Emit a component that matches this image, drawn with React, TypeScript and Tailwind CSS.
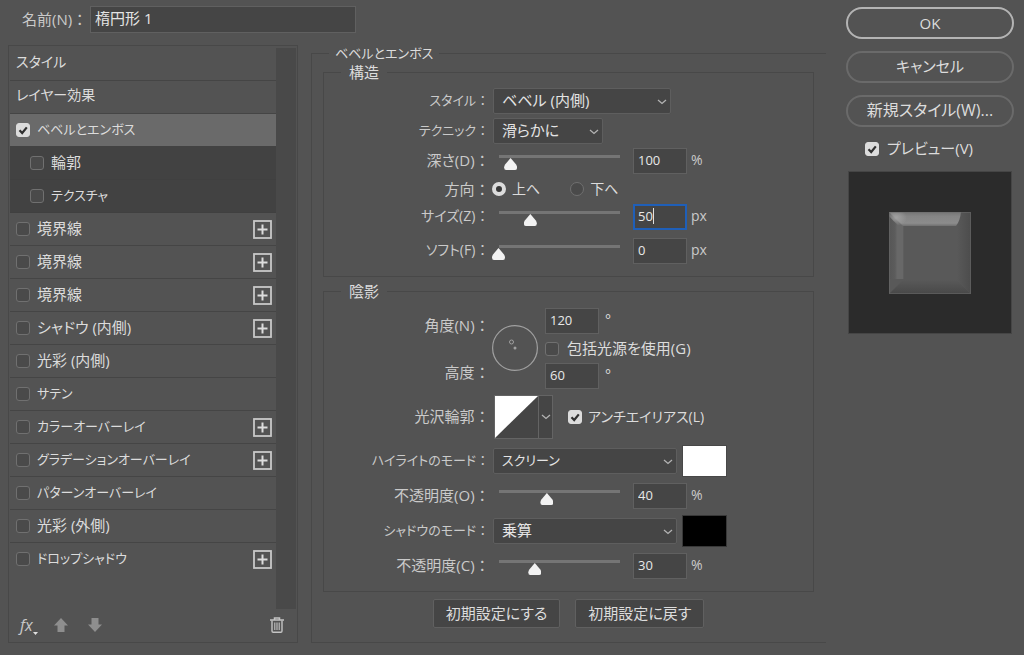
import React, { useEffect, useRef } from "react";
import clsx from "clsx";

interface Effect {
  id: string;
  label: string;
  checked?: boolean;
  selected?: boolean;
  sub?: boolean;
  addable?: boolean;
}

const EFFECTS: Effect[] = [
  { id: "bevel", label: "ベベルとエンボス", checked: true, selected: true },
  { id: "contour", label: "輪郭", sub: true },
  { id: "texture", label: "テクスチャ", sub: true },
  { id: "stroke-1", label: "境界線", addable: true },
  { id: "stroke-2", label: "境界線", addable: true },
  { id: "stroke-3", label: "境界線", addable: true },
  { id: "inner-shadow", label: "シャドウ (内側)", addable: true },
  { id: "inner-glow", label: "光彩 (内側)" },
  { id: "satin", label: "サテン" },
  { id: "color", label: "カラーオーバーレイ", addable: true },
  { id: "gradient", label: "グラデーションオーバーレイ", addable: true },
  { id: "pattern", label: "パターンオーバーレイ" },
  { id: "outer-glow", label: "光彩 (外側)" },
  { id: "drop-shadow", label: "ドロップシャドウ", addable: true },
];

const textSize = (text: string) => {
  if (/[一-龠]/.test(text)) return "text-[15px]";
  return /[A-Z]/.test(text) ? "text-[14px]" : "text-[13px]";
};

const Check: React.FC<{ id: string; checked?: boolean }> = ({ id, checked }) => (
  <span className="relative flex shrink-0">
    <input
      id={id}
      type="checkbox"
      defaultChecked={checked}
      className="peer size-3.5 appearance-none rounded-[3px] border border-[#707070] bg-[#4a4a4a] checked:border-[#dcdcdc] checked:bg-[#dcdcdc]"
    />
    <svg viewBox="0 0 14 14" className="pointer-events-none absolute inset-0 hidden size-3.5 peer-checked:block">
      <path d="M3.5 7.2 6.2 10 10.8 4.4" fill="none" stroke="#303030" strokeWidth="2.2" />
    </svg>
  </span>
);

const Chevron: React.FC<{ className?: string }> = ({ className }) => (
  <svg viewBox="0 0 10 6" className={clsx("h-1.5 w-2.5", className)}>
    <path d="M1 1 5 4.4 9 1" fill="none" stroke="#b4b4b4" strokeWidth="1.3" />
  </svg>
);

const Select: React.FC<{ id: string; value: string; className: string }> = ({ id, value, className }) => (
  <span className={clsx("relative flex", className)}>
    <select
      id={id}
      defaultValue={value}
      className={clsx(
        "h-[26px] w-full appearance-none rounded-[2px] border border-[#5e5e5e] bg-[#454545] pr-6 pb-0.5 pl-2 text-[#e4e4e4]",
        textSize(value)
      )}
    >
      <option>{value}</option>
    </select>
    <Chevron className="pointer-events-none absolute top-[11px] right-1" />
  </span>
);

const NumberField: React.FC<{ id: string; value: string; focused?: boolean }> = ({ id, value, focused }) => {
  const ref = useRef<HTMLInputElement>(null);

  useEffect(() => {
    if (!focused || !ref.current) return;
    ref.current.focus();
    ref.current.setSelectionRange(value.length, value.length);
  }, [focused, value]);

  return (
    <span className="relative flex">
      <input
        id={id}
        ref={ref}
        type="text"
        defaultValue={value}
        className="peer h-[26px] w-[54px] border border-[#606060] bg-[#454545] px-1 pb-0.5 text-[13px] text-[#e8e8e8] caret-transparent outline-none focus:border-[#1f5fb8] focus:ring-1 focus:ring-[#1f5fb8] focus:ring-inset"
      />
      <span className="pointer-events-none absolute top-1 left-5 hidden h-4 w-px bg-[#e0e0e0] peer-focus:block" />
    </span>
  );
};

const Label: React.FC<{ htmlFor: string; text: string }> = ({ htmlFor, text }) => (
  <label
    htmlFor={htmlFor}
    className={clsx("w-[162px] shrink-0 pb-0.5 text-right whitespace-pre text-[#cacaca]", textSize(text))}
  >
    {text} ：
  </label>
);

interface SliderProps {
  id: string;
  label: string;
  value: number;
  max: number;
  unit: string;
  focused?: boolean;
}

const SliderRow: React.FC<SliderProps> = ({ id, label, value, max, unit, focused }) => (
  <div className="flex h-[26px] items-center">
    <Label htmlFor={id} text={label} />
    <input
      type="range"
      aria-label={label}
      min={0}
      max={max}
      defaultValue={value}
      className="ml-1.5 h-5 w-[134px] appearance-none bg-[linear-gradient(#757575,#757575)] bg-[length:121px_3px] bg-[position:7px_4px] bg-no-repeat [&::-webkit-slider-runnable-track]:h-5 [&::-webkit-slider-thumb]:mt-[7px] [&::-webkit-slider-thumb]:h-3 [&::-webkit-slider-thumb]:w-[13px] [&::-webkit-slider-thumb]:appearance-none [&::-webkit-slider-thumb]:bg-[#f2f2f2] [&::-webkit-slider-thumb]:[clip-path:path('M6.5_0L12_6.5Q13_8_13_9.5Q13_12_11_12H2Q0_12_0_9.5Q0_8_1_6.5Z')]"
    />
    <span className="ml-[7px] flex items-center gap-1">
      <NumberField id={id} value={String(value)} focused={focused} />
      <span className="pb-0.5 text-[#cacaca]">{unit}</span>
    </span>
  </div>
);

const Radio: React.FC<{ label: string; checked?: boolean }> = ({ label, checked }) => (
  <label className="flex items-center gap-1.5 text-[#dcdcdc]">
    <input
      type="radio"
      name="direction"
      defaultChecked={checked}
      className="size-3.5 appearance-none rounded-full border border-[#707070] bg-[#4a4a4a] checked:border-4 checked:border-[#dcdcdc] checked:bg-[#383838]"
    />
    {label}
  </label>
);

const EffectRow: React.FC<{ effect: Effect }> = ({ effect }) => (
  <li
    className={clsx(
      "flex h-[33px] items-center gap-[7px] border-b pr-1",
      effect.sub ? "border-[#404040] bg-[#424242] pl-5" : "pl-1.5",
      effect.selected ? "border-[#424242] bg-[#6a6a6a]" : !effect.sub && "border-[#454545]",
      effect.id === "drop-shadow" && "border-transparent"
    )}
  >
    <Check id={effect.id} checked={effect.checked} />
    <label htmlFor={effect.id} className={clsx("flex-1 pb-0.5", textSize(effect.label))}>
      {effect.label}
    </label>
    {effect.addable && (
      <button type="button" aria-label="追加">
        <svg viewBox="0 0 19 19" className="size-[19px]" fill="none" stroke="#c8c8c8">
          <rect x="1" y="1" width="17" height="17" strokeWidth="1.8" />
          <path d="M9.5 4.5v10M4.5 9.5h10" stroke="#dcdcdc" strokeWidth="2" />
        </svg>
      </button>
    )}
  </li>
);

const EffectList: React.FC = () => (
  <aside className="mt-px flex w-[290px] shrink-0 flex-col border border-[#484848] p-px">
    <div className="flex flex-1 pt-px">
      <ul className="flex-1">
        <li className="flex h-[33px] items-center border-b border-[#454545] pb-1 pl-1.5">スタイル</li>
        <li className="flex h-[33px] items-center border-b border-[#454545] pb-1 pl-1.5">レイヤー効果</li>
        {EFFECTS.map((effect) => (
          <EffectRow key={effect.id} effect={effect} />
        ))}
      </ul>
      <div className="w-5 bg-[#494949]" />
    </div>
    <div className="flex h-8 items-center pl-2.5">
      <button type="button" className="flex items-end text-base text-[#c8c8c8] italic">
        <span className="leading-5">fx</span>
        <svg viewBox="0 0 5 3" className="h-[3px] w-[5px]">
          <path d="M0 0h5L2.5 3z" fill="#e0e0e0" />
        </svg>
      </button>
      <button type="button" aria-label="上へ移動" className="ml-4">
        <svg viewBox="0 0 14 14" className="size-3.5" fill="#8e8e8e">
          <path d="M7 0 14 7.5H10.500V14H3.500V7.5H0z" />
        </svg>
      </button>
      <button type="button" aria-label="下へ移動" className="ml-5">
        <svg viewBox="0 0 14 14" className="size-3.5" fill="#8e8e8e">
          <path d="M7 14 14 6.500H10.500V0H3.500V6.500H0z" />
        </svg>
      </button>
      <button type="button" aria-label="削除" className="mr-3 ml-auto">
        <svg viewBox="0 0 14 16" className="h-4 w-3.5" fill="none" stroke="#c4c4c4">
          <path d="M0 3h14M4.500 2.500V1h5v1.500" strokeWidth="1.5" />
          <path d="M2 3.500V14q0 1.200 1.200 1.200h7.600Q12 15.200 12 14V3.500" strokeWidth="1.400" />
          <path d="M4.800 5.500v7.500M7 5.500v7.500M9.200 5.500v7.500" strokeWidth="1.100" />
        </svg>
      </button>
    </div>
  </aside>
);

const Structure: React.FC = () => (
  <fieldset className="mt-px border border-[#484848] pb-3">
    <legend className="ml-[17px] px-2 text-[15px] leading-[18px]">構造</legend>
    <div className="flex flex-col gap-1 pt-[7px]">
      <div className="flex items-center gap-[7px]">
        <Label htmlFor="style" text="スタイル" />
        <Select id="style" value="ベベル (内側)" className="w-[178px]" />
      </div>
      <div className="flex items-center gap-[7px]">
        <Label htmlFor="technique" text="テクニック" />
        <Select id="technique" value="滑らかに" className="w-[110px]" />
      </div>
      <SliderRow id="depth" label="深さ(D)" value={100} max={1000} unit="%" />
      <div className="flex h-[22px] items-center gap-1.5">
        <span className="w-[162px] shrink-0 text-right text-[15px] text-[#cacaca]">方向 ：</span>
        <div className="flex gap-[30px]">
          <Radio label="上へ" checked />
          <Radio label="下へ" />
        </div>
      </div>
      <SliderRow id="size" label="サイズ(Z)" value={50} max={190} unit="px" focused />
      <div className="pt-1">
        <SliderRow id="soften" label="ソフト(F)" value={0} max={16} unit="px" />
      </div>
    </div>
  </fieldset>
);

const Shading: React.FC = () => (
  <fieldset className="mt-[5px] border border-[#484848] pb-3">
    <legend className="ml-[17px] px-2 text-[15px] leading-[18px]">陰影</legend>
    <div className="flex flex-col gap-1.5 pt-2">
      <div className="flex">
        <div className="flex flex-col gap-[23px] pt-1.5 leading-[22px]">
          <Label htmlFor="angle" text="角度(N)" />
          <Label htmlFor="altitude" text="高度" />
        </div>
        <svg viewBox="0 0 46 46" className="mt-[17px] ml-1.5 size-[46px]" fill="none" stroke="#a0a0a0">
          <circle cx="23" cy="23" r="22.400" strokeWidth="1.200" />
          <circle cx="19.500" cy="17" r="2" strokeWidth="1" />
          <circle cx="23" cy="23" r="1.500" fill="#a0a0a0" stroke="none" />
        </svg>
        <div className="ml-[7px] flex flex-col">
          <span className="flex gap-1.5 leading-6">
            <NumberField id="angle" value="120" />°
          </span>
          <span className="flex h-[29px] items-center gap-2">
            <Check id="global-light" />
            <label htmlFor="global-light" className="pb-0.5 text-[15px]">
              包括光源を使用(G)
            </label>
          </span>
          <span className="flex gap-1.5 leading-6">
            <NumberField id="altitude" value="60" />°
          </span>
        </div>
      </div>
      <div className="flex items-center">
        <Label htmlFor="gloss" text="光沢輪郭" />
        <button id="gloss" type="button" aria-label="光沢輪郭" className="ml-2 flex h-[44px] border border-[#646464] bg-[#454545]">
          <svg viewBox="0 0 43 42" className="h-[42px] w-[43px]">
            <path d="M0 0H43L0 42z" fill="#fff" />
          </svg>
          <span className="flex h-full w-[14px] items-center justify-center border-l border-[#646464]">
            <Chevron />
          </span>
        </button>
        <span className="ml-[15px] flex items-center gap-1.5">
          <Check id="anti-alias" checked />
          <label htmlFor="anti-alias">アンチエイリアス(L)</label>
        </span>
      </div>
      <div className="flex items-center">
        <Label htmlFor="highlight" text="ハイライトのモード" />
        <Select id="highlight" value="スクリーン" className="ml-[7px] w-[184px]" />
        <button type="button" aria-label="ハイライトのカラー" className="ml-[5px] h-8 w-[45px] border border-[#484848] bg-white" />
      </div>
      <SliderRow id="highlight-opacity" label="不透明度(O)" value={40} max={100} unit="%" />
      <div className="flex items-center">
        <Label htmlFor="shadow" text="シャドウのモード" />
        <Select id="shadow" value="乗算" className="ml-[7px] w-[184px]" />
        <button type="button" aria-label="シャドウのカラー" className="ml-[5px] h-8 w-[45px] border border-[#383838] bg-black" />
      </div>
      <SliderRow id="shadow-opacity" label="不透明度(C)" value={30} max={100} unit="%" />
    </div>
  </fieldset>
);

// Thumbnail of the bevelled square, lit from the top left
const StylePreview: React.FC = () => (
  <svg viewBox="0 0 164 163" className="w-full">
    <defs>
      <linearGradient id="edge-top" x2="0" y2="1">
        <stop offset="0" stopColor="#747474" />
        <stop offset="0.300" stopColor="#858585" />
        <stop offset="0.800" stopColor="#8c8c8c" />
        <stop offset="1" stopColor="#707070" />
      </linearGradient>
      <linearGradient id="edge-left">
        <stop offset="0" stopColor="#565656" />
        <stop offset="0.400" stopColor="#5c5c5c" />
        <stop offset="0.550" stopColor="#686868" />
        <stop offset="0.900" stopColor="#686868" />
        <stop offset="1" stopColor="#595959" />
      </linearGradient>
      <linearGradient id="edge-right">
        <stop offset="0" stopColor="#595959" />
        <stop offset="1" stopColor="#4c4c4c" />
      </linearGradient>
      <linearGradient id="edge-bottom" x2="0" y2="1">
        <stop offset="0" stopColor="#595959" />
        <stop offset="1" stopColor="#484848" />
      </linearGradient>
      <radialGradient id="corner" cx="0.400" cy="0.400" r="0.600">
        <stop offset="0" stopColor="#a2a2a2" />
        <stop offset="1" stopColor="#a2a2a2" stopOpacity="0" />
      </radialGradient>
    </defs>
    <rect x="0.500" y="0.500" width="163" height="162" fill="#2b2b2b" stroke="#454545" />
    <g transform="translate(41 41)">
      <rect width="82" height="82" fill="#595959" />
      <path d="M68 0H82V82L68 68z" fill="url(#edge-right)" />
      <path d="M0 82 14 68H68L82 82z" fill="url(#edge-bottom)" />
      <path d="M0 0 15 14V67H0z" fill="url(#edge-left)" />
      <path d="M0 0H72Q71 9 67 14H14z" fill="url(#edge-top)" />
      <path d="M0 0H18V14H10Q4 9 0 4z" fill="url(#corner)" />
      <rect x="0.500" y="0.500" width="81" height="81" fill="none" stroke="#6c6c6c" strokeOpacity="0.500" />
    </g>
  </svg>
);

const App: React.FC = () => (
  <div className="flex min-h-screen gap-5 bg-[#535353] pt-1.5 pr-2.5 pb-3 pl-2 font-['Open_Sans','Noto_Sans_CJK_JP',sans-serif] text-[14px] leading-5 text-[#dcdcdc] [font-feature-settings:'palt']">
    <main className="flex flex-1 flex-col">
      <div className="flex items-center">
        <label htmlFor="name" className="w-[82px] pb-0.5 pl-3.5 text-[15px] whitespace-nowrap text-[#cacaca]">
          名前(N) ：
        </label>
        <input
          id="name"
          type="text"
          defaultValue="楕円形 1"
          className="h-[27px] w-[266px] border border-[#606060] bg-[#454545] px-1 pb-1 text-[15px] text-[#e4e4e4] outline-none"
        />
      </div>
      <div className="mt-[11px] flex flex-1 gap-[13px]">
        <EffectList />
        <fieldset className="flex-1 border-y border-l border-[#484848] pr-3 pb-3.5 pl-[11px]">
          <legend className="ml-1.5 px-1.5 text-[13px] leading-[18px]">ベベルとエンボス</legend>
          <Structure />
          <Shading />
          <div className="mt-[7px] flex justify-center gap-[15px]">
            <button type="button" className="h-[29px] rounded-[2px] border border-[#606060] bg-[#454545] px-3 pb-0.5 text-[15px]">
              初期設定にする
            </button>
            <button type="button" className="h-[29px] rounded-[2px] border border-[#606060] bg-[#454545] px-3 pb-0.5 text-[15px]">
              初期設定に戻す
            </button>
          </div>
        </fieldset>
      </div>
    </main>
    <div className="flex w-[168px] shrink-0 flex-col gap-3 pt-px text-[15px]">
      <button type="button" className="h-8 rounded-full border-2 border-[#b4b4b4]">
        OK
      </button>
      <button type="button" className="h-8 rounded-full border-2 border-[#6a6a6a] pb-0.5">
        キャンセル
      </button>
      <button type="button" className="h-8 rounded-full border-2 border-[#6a6a6a] pb-0.5 text-base">
        新規スタイル(W)...
      </button>
      <div className="flex items-center gap-2 pl-[19px]">
        <Check id="preview" checked />
        <label htmlFor="preview" className="pb-0.5 leading-[18px]">
          プレビュー(V)
        </label>
      </div>
      <div className="px-0.5">
        <StylePreview />
      </div>
    </div>
  </div>
);

export default App;
